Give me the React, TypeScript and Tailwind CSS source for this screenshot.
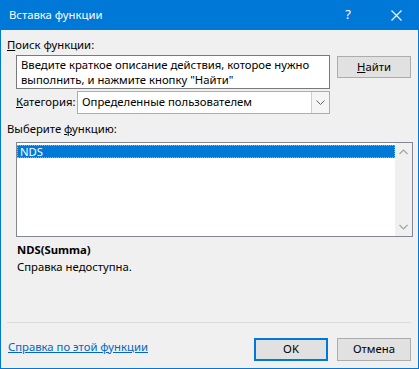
import React from "react";

const font = { fontFamily: '"Noto Sans", "Open Sans", sans-serif' };

export default function App() {
  return (
    <div className="w-[419px] h-[369px] flex flex-col text-[11.3px] text-black select-none" style={font}>
      {/* title bar */}
      <div className="h-[30px] bg-[#0078d7] flex items-center text-white shrink-0">
        <div className="pl-[9px] text-[11.3px] flex-1">Вставка функции</div>
        <div className="w-[46px] text-center text-[13px] mr-[2px]">?</div>
        <div className="w-[46px] h-full flex items-center justify-center">
          <svg width="11" height="11" viewBox="0 0 11 11">
            <path d="M0.5 0.5 L10.5 10.5 M10.5 0.5 L0.5 10.5" stroke="white" strokeWidth="1.1" />
          </svg>
        </div>
      </div>
      {/* body */}
      <div className="flex-1 bg-[#f0f0f0] border-x border-b border-[#0078d7] flex flex-col pl-[6px] pr-[6px]">
        <div className="mt-[7px] h-[16px] leading-[16px]">
          <span className="underline">П</span>оиск функции:
        </div>
        <div className="flex mt-[2px] ml-[9px]">
          <div className="w-[314px] h-[34px] bg-white border border-[#7a7a7a] px-[4px] pt-[1px] leading-[15px]">
            Введите краткое описание действия, которое нужно выполнить, и нажмите кнопку "Найти"
          </div>
          <button className="ml-[7px] mt-[1px] w-[74px] h-[22px] bg-[#e1e1e1] border border-[#adadad] flex items-center justify-center">
            <span><span className="underline">Н</span>айти</span>
          </button>
        </div>
        <div className="flex items-center mt-[2px] ml-[9px] h-[23px]">
          <div className="w-[61px] whitespace-nowrap">
            <span className="underline">К</span>атегория:
          </div>
          <div className="w-[253px] h-[23px] bg-white border border-[#adadad] flex items-center">
            <div className="flex-1 pl-[4px]">Определенные пользователем</div>
            <div className="w-[18px] h-[21px] border-l border-[#cfcfcf] bg-[#f5f5f5] flex items-center justify-center">
              <svg width="9" height="6" viewBox="0 0 9 6">
                <path d="M0.5 0.5 L4.5 4.5 L8.5 0.5" stroke="#606060" strokeWidth="1" fill="none" />
              </svg>
            </div>
          </div>
        </div>
        <div className="mt-[7px] h-[16px] leading-[16px]">
          Выберите <span className="underline">ф</span>ункцию:
        </div>
        <div className="mt-[5px] ml-[9px] w-[397px] h-[95px] bg-white border border-[#828790] flex">
          <div className="flex-1 pt-[2px]">
            <div className="h-[13px] bg-[#0078d7] text-white leading-[13px] pl-[3px] outline-1 outline-dotted outline-[#80b8e8] -outline-offset-1">
              NDS
            </div>
          </div>
          <div className="w-[17px] bg-[#f0f0f0] flex flex-col justify-between items-center py-[6px]">
            <svg width="9" height="6" viewBox="0 0 9 6">
              <path d="M0.5 5 L4.5 1 L8.5 5" stroke="#a3a3a3" strokeWidth="1.2" fill="none" />
            </svg>
            <svg width="9" height="6" viewBox="0 0 9 6">
              <path d="M0.5 1 L4.5 5 L8.5 1" stroke="#a3a3a3" strokeWidth="1.2" fill="none" />
            </svg>
          </div>
        </div>
        <div className="ml-[10px] mt-[5px] h-[16px] leading-[16px] font-bold">NDS(Summa)</div>
        <div className="ml-[10px] mt-[1px] h-[16px] leading-[16px]">Справка недоступна.</div>
        <div className="mt-[47px] h-px bg-[#dcdcdc] mr-[1px]" />
        <div className="flex items-center mt-[15px]">
          <div className="flex-1 text-[#0066cc] underline pl-[1px] -mt-[5px]">Справка по этой функции</div>
          <button className="w-[74px] h-[23px] bg-[#e1e1e1] border-2 border-[#0078d7] flex items-center justify-center">
            OK
          </button>
          <button className="ml-[9px] mr-[1px] w-[74px] h-[23px] bg-[#e1e1e1] border border-[#adadad] flex items-center justify-center">
            Отмена
          </button>
        </div>
      </div>
    </div>
  );
}
